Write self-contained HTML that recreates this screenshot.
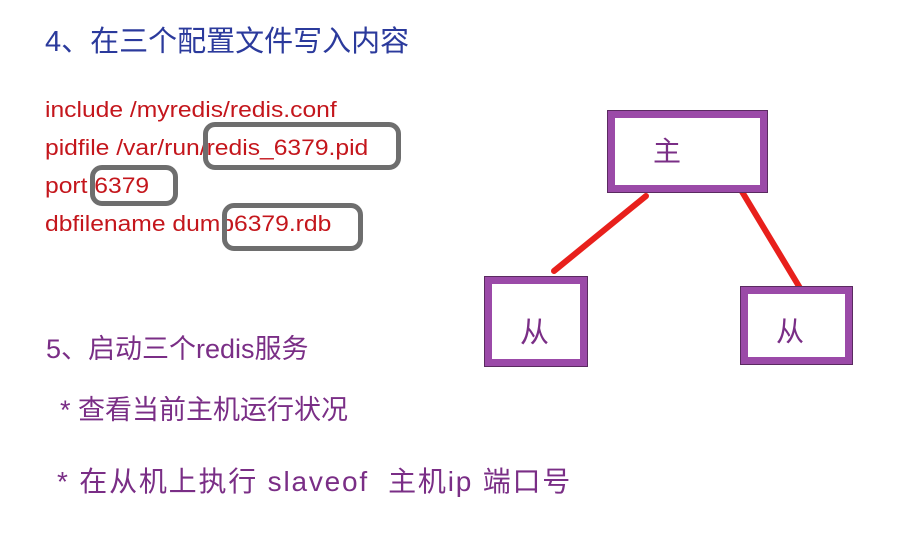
<!DOCTYPE html>
<html><head><meta charset="utf-8"><style>
body{margin:0;width:898px;height:556px;background:#fff;position:relative;overflow:hidden;font-family:"Liberation Sans","Noto Sans CJK SC",sans-serif}
.t{position:absolute;white-space:nowrap;line-height:1}
.code{color:#c4161c;font-size:22px;left:45px;transform:scaleX(1.12);transform-origin:0 0}
.p{color:#7a2e86}
.ov{position:absolute;border:5px solid #6e6e6e;border-radius:12px;box-sizing:border-box}
.bx{position:absolute;border:7px solid #9b4aa8;box-sizing:border-box;outline:1px solid #5a2a60}
</style></head><body>
<div class="t" style="left:45px;top:28px;font-size:29px;color:#2b3a9c">4、在三个配置文件写入内容</div>
<div class="t code" style="top:99px">include /myredis/redis.conf</div>
<div class="t code" style="top:137px">pidfile /var/run/redis_6379.pid</div>
<div class="t code" style="top:175px">port 6379</div>
<div class="t code" style="top:213px">dbfilename dump6379.rdb</div>
<div class="ov" style="left:203px;top:122px;width:198px;height:48px"></div>
<div class="ov" style="left:90px;top:165px;width:88px;height:41px"></div>
<div class="ov" style="left:222px;top:203px;width:141px;height:48px"></div>
<div class="t p" style="left:46px;top:336px;font-size:27px">5、启动三个redis服务</div>
<div class="t p" style="left:60px;top:397px;font-size:27px">* 查看当前主机运行状况</div>
<div class="t p" style="left:57px;top:468px;font-size:28px;letter-spacing:1.8px">* 在从机上执行 slaveof&nbsp; 主机ip 端口号</div>
<svg style="position:absolute;left:0;top:0" width="898" height="556">
<line x1="646" y1="196" x2="554" y2="271" stroke="#e8201c" stroke-width="6" stroke-linecap="round"/>
<line x1="741" y1="190" x2="800" y2="288" stroke="#e8201c" stroke-width="6" stroke-linecap="round"/>
</svg>
<div class="bx" style="left:608px;top:111px;width:159px;height:81px"></div>
<div class="bx" style="left:485px;top:277px;width:102px;height:89px"></div>
<div class="bx" style="left:741px;top:287px;width:111px;height:77px"></div>
<div class="t p" style="left:653px;top:138px;font-size:28px">主</div>
<div class="t p" style="left:520px;top:319px;font-size:29px">从</div>
<div class="t p" style="left:776px;top:318px;font-size:28px">从</div>
</body></html>
